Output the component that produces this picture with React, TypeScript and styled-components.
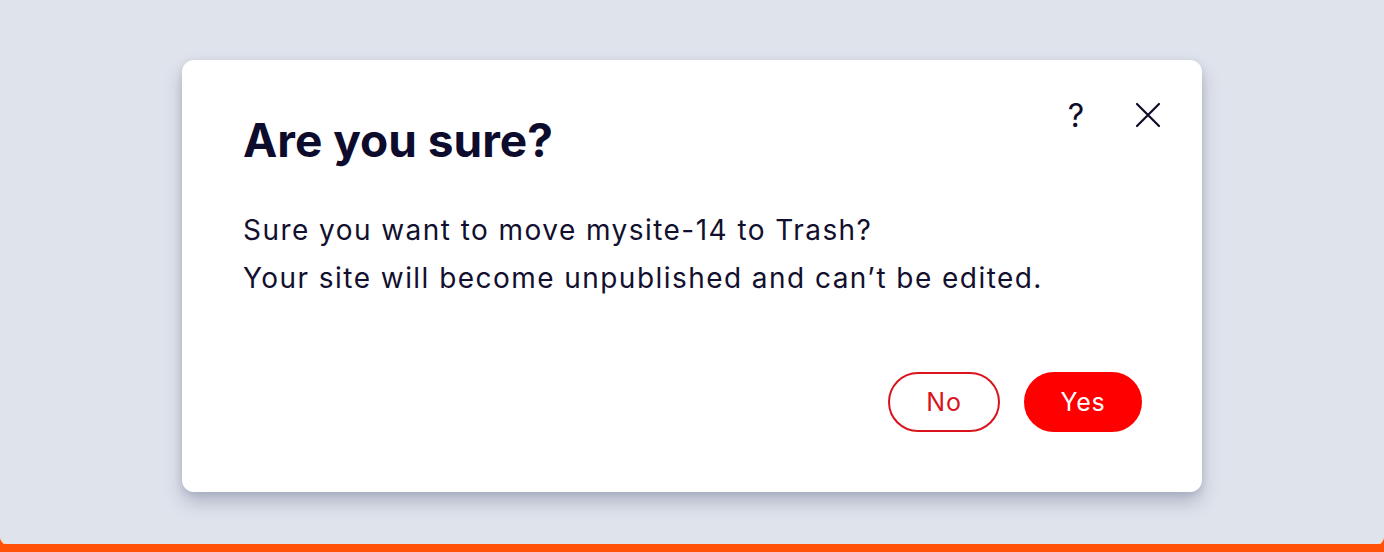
import React from "react";
import styled, { createGlobalStyle } from "styled-components";

const Global = createGlobalStyle`
  html, body { margin: 0; padding: 0; }
  body { background: #ff5208; font-family: "Inter", "Noto Sans", sans-serif; }
`;

const Page = styled.div`
  height: 544px;
  background: #dfe3ec;
  border-radius: 0 0 8px 8px;
  box-shadow: 0 1px 0 #f6d5c0;
  display: flex;
  justify-content: center;
  padding-top: 60px;
  box-sizing: border-box;
`;

const Card = styled.div`
  width: 1020px;
  height: 432px;
  background: #ffffff;
  border-radius: 12px;
  box-shadow: 0 10px 18px rgba(54, 64, 100, 0.28), 0 2px 6px rgba(54, 64, 100, 0.12);
  box-sizing: border-box;
  padding: 0 60px 0 61px;
  display: flex;
  flex-direction: column;
`;

const Header = styled.div`
  display: flex;
  justify-content: space-between;
  align-items: flex-start;
`;

const Title = styled.h1`
  margin: 49px 0 0;
  font-size: 46px;
  line-height: 62px;
  font-weight: 700;
  color: #0e0c2c;
`;

const Actions = styled.div`
  display: flex;
  align-items: center;
  gap: 48px;
  margin-top: 40px;
  margin-right: -20px;
`;

const IconButton = styled.button`
  border: none;
  background: none;
  padding: 0;
  display: flex;
  align-items: center;
  justify-content: center;
  color: #0e0c2c;
  cursor: pointer;
  font-family: "Inter", sans-serif;
`;

const Help = styled(IconButton)`
  font-size: 32px;
  font-weight: 400;
  width: 20px;
  height: 30px;
`;

const Body = styled.p`
  margin: 35px 0 0;
  font-size: 28px;
  line-height: 48px;
  letter-spacing: 1.45px;
  color: #12102e;
  font-weight: 400;
`;

const Footer = styled.div`
  display: flex;
  justify-content: flex-end;
  gap: 24px;
  margin-top: auto;
  margin-bottom: 60px;
`;

const Btn = styled.button<{ $primary?: boolean }>`
  height: 60px;
  border-radius: 30px;
  padding: 0;
  width: ${(p) => (p.$primary ? "118px" : "112px")};
  font-family: "Inter", sans-serif;
  font-size: 25px;
  letter-spacing: 0.8px;
  font-weight: 400;
  cursor: pointer;
  box-sizing: border-box;
  border: 2px solid ${(p) => (p.$primary ? "#ff0000" : "#d9141c")};
  background: ${(p) => (p.$primary ? "#ff0000" : "#ffffff")};
  color: ${(p) => (p.$primary ? "#ffffff" : "#d9141c")};
`;

export default function App() {
  return (
    <>
      <Global />
      <Page>
        <Card>
          <Header>
            <Title>Are you sure?</Title>
            <Actions>
              <Help aria-label="Help">?</Help>
              <IconButton aria-label="Close">
                <svg width="28" height="28" viewBox="0 0 28 28" fill="none">
                  <path d="M3 3L25 25M25 3L3 25" stroke="#0e0c2c" strokeWidth="2.2" strokeLinecap="round" />
                </svg>
              </IconButton>
            </Actions>
          </Header>
          <Body>
            Sure you want to move mysite-14 to Trash?
            <br />
            Your site will become unpublished and can’t be edited.
          </Body>
          <Footer>
            <Btn>No</Btn>
            <Btn $primary>Yes</Btn>
          </Footer>
        </Card>
      </Page>
    </>
  );
}
